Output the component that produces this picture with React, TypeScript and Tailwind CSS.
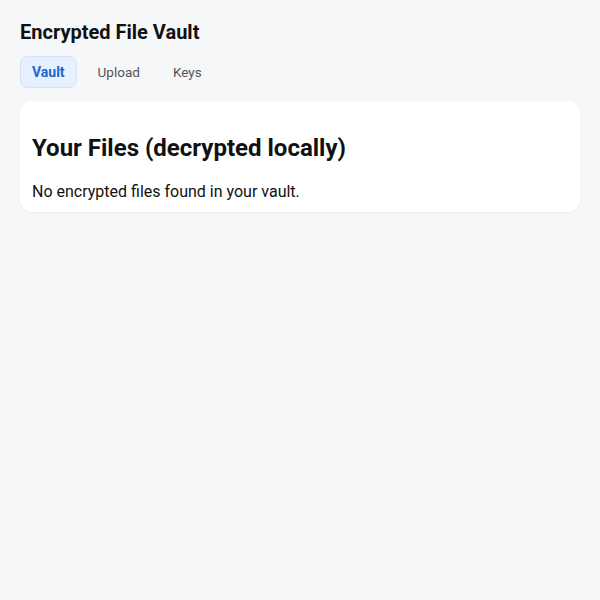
export default function App() {
  const tabs = ["Vault", "Upload", "Keys"];
  const active = "Vault";

  return (
    <div
      className="min-h-screen bg-[#f6f7f9] px-5 pt-[18px] text-[#111]"
      style={{ fontFamily: "Roboto, 'Liberation Sans', sans-serif" }}
    >
      <h1 className="text-xl font-bold leading-7">Encrypted File Vault</h1>

      {/* Tabs */}
      <div className="mt-2.5 flex gap-[9px]">
        {tabs.map((t) =>
          t === active ? (
            <button
              key={t}
              className="h-8 px-[11px] rounded-lg border border-[#d3e2fa] bg-[#e7f0ff] text-sm font-bold text-[#1c66cc]"
            >
              {t}
            </button>
          ) : (
            <button
              key={t}
              className="h-8 px-[11px] rounded-lg border border-transparent text-[13.5px] text-[#555]"
            >
              {t}
            </button>
          )
        )}
      </div>

      {/* Card */}
      <div className="mt-[13px] rounded-xl bg-white px-3 pt-[31px] pb-2 shadow-[0_1px_3px_rgba(0,0,0,0.04)]">
        <h2 className="text-2xl font-bold leading-8">Your Files (decrypted locally)</h2>
        <p className="mt-4 text-base leading-6">No encrypted files found in your vault.</p>
      </div>
    </div>
  );
}
